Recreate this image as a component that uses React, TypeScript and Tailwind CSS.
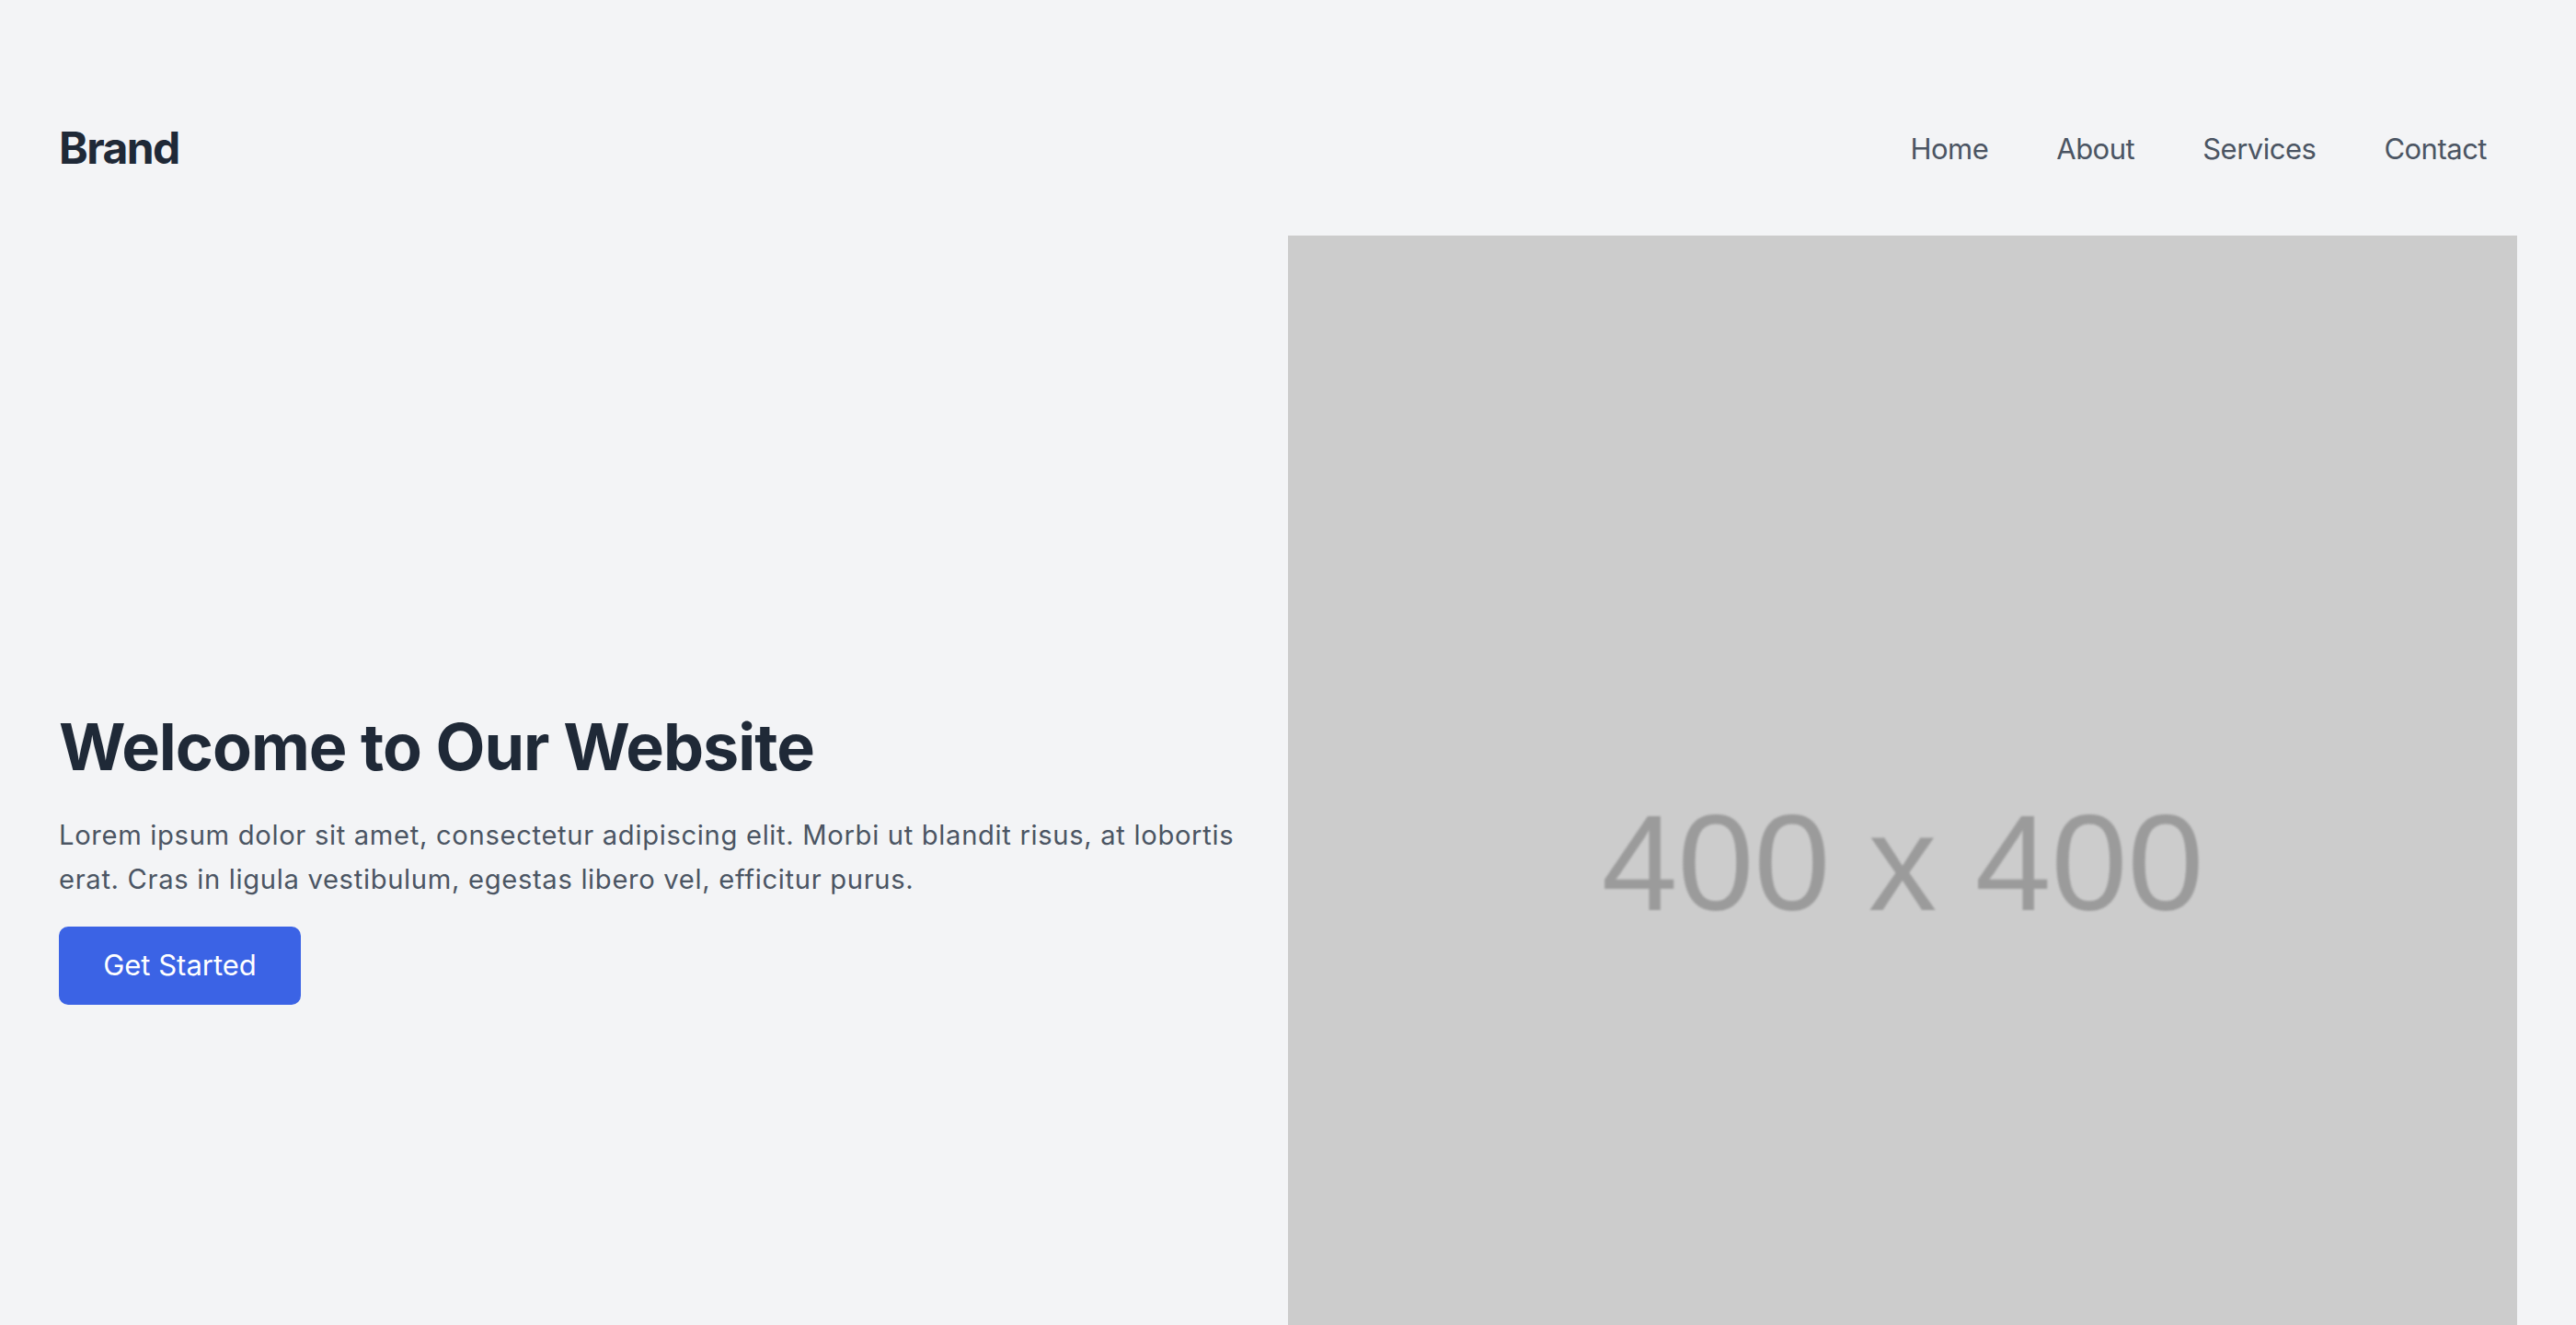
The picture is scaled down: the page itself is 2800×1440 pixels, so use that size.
import React from "react";

export default function App() {
  return (
    <div className="min-h-screen bg-[#f3f4f6] font-['Inter',sans-serif]">
      <header className="flex h-[256px] items-center justify-between pl-[64px] pr-[97px] pt-[66px]">
        <div className="text-[48px] font-bold leading-none tracking-[-1.6px] text-[#1f2937]">Brand</div>
        <nav className="flex gap-[74px] text-[31px] leading-none tracking-[-0.5px] text-[#4b5563]">
          <a href="#">Home</a>
          <a href="#">About</a>
          <a href="#">Services</a>
          <a href="#">Contact</a>
        </nav>
      </header>
      <main className="grid grid-cols-2 px-[64px]">
        <div className="flex flex-col items-start justify-center pr-[20px] pt-[14px]">
          <h1 className="text-[70px] font-bold leading-[84px] tracking-[-1px] text-[#1f2937]">
            Welcome to Our Website
          </h1>
          <p className="mt-[30px] text-[29.2px] leading-[48px] tracking-[0.67px] text-[#4b5563]">
            Lorem ipsum dolor sit amet, consectetur adipiscing elit. Morbi ut blandit risus, at lobortis erat. Cras in ligula vestibulum, egestas libero vel, efficitur purus.
          </p>
          <button className="mt-[27px] h-[85px] w-[263px] rounded-[10px] bg-[#3b63e5] text-[31px] text-white">
            Get Started
          </button>
        </div>
        <div className="flex aspect-square w-full items-center justify-center bg-[#cccccc]">
          <span className="mt-[26px] font-['Liberation_Sans',Arial,sans-serif] text-[149px] leading-none text-[#9b9b9b] blur-[1px]">
            400 x 400
          </span>
        </div>
      </main>
    </div>
  );
}
